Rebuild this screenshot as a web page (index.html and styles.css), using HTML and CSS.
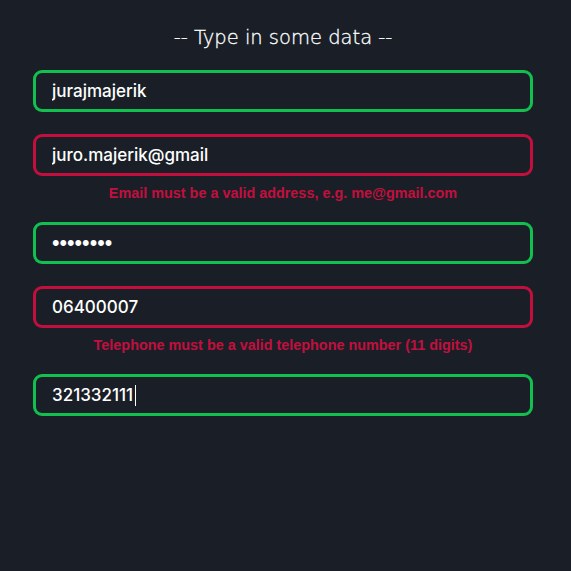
FILE: index.html
```html
<!DOCTYPE html>
<html>
<head>
<meta charset="utf-8">
<link rel="stylesheet" href="styles.css">
</head>
<body>
<div class="page">
  <h1 class="title">-- Type in some data --</h1>
  <form class="form">
    <div class="field">
      <input class="input valid" type="text" value="jurajmajerik">
    </div>
    <div class="field">
      <input class="input invalid" type="text" value="juro.majerik@gmail">
      <div class="error">Email must be a valid address, e.g. me@gmail.com</div>
    </div>
    <div class="field">
      <input class="input valid password" type="password" value="password">
    </div>
    <div class="field">
      <input class="input invalid" type="text" value="06400007">
      <div class="error">Telephone must be a valid telephone number (11 digits)</div>
    </div>
    <div class="field">
      <div class="input valid fake">321332111<span class="caret"></span></div>
    </div>
  </form>
</div>
</body>
</html>
```

FILE: styles.css
```css
html, body {
  margin: 0;
  padding: 0;
  background: #1a1f27;
  height: 100%;
}
.page {
  padding: 25px 38px 0 33px;
  display: flex;
  flex-direction: column;
  align-items: stretch;
}
.title {
  margin: 0 0 19px 0;
  text-align: center;
  font-family: "DejaVu Sans", sans-serif;
  font-weight: 200;
  font-size: 19.5px;
  line-height: 26px;
  color: #ffffff;
  -webkit-text-stroke: 0.3px #ffffff;
}
.form {
  display: flex;
  flex-direction: column;
  gap: 22px;
}
.field {
  display: flex;
  flex-direction: column;
}
.input {
  box-sizing: border-box;
  width: 100%;
  height: 42px;
  border: 3px solid #1fc05a;
  border-radius: 9px;
  background: #1a1f27;
  color: #ffffff;
  font-family: Inter, "Liberation Sans", Arial, sans-serif;
  font-size: 17px;
  font-weight: 500;
  padding: 0 16px;
  outline: none;
  display: flex;
  align-items: center;
}
.input.password {
  font-family: "Liberation Sans", Arial, sans-serif;
  font-size: 21.5px;
  letter-spacing: 0;
}
.input.valid { border-color: #12c04f; }
.input.invalid { border-color: #c20f3e; }
.caret {
  display: inline-block;
  width: 1px;
  height: 21px;
  background: #ffffff;
  margin-left: 2px;
}
.error {
  margin-top: 8px;
  margin-bottom: -2px;
  text-align: center;
  font-family: "Liberation Sans", Arial, sans-serif;
  font-weight: bold;
  font-size: 14.4px;
  line-height: 18px;
  color: #c20f3e;
}
```
